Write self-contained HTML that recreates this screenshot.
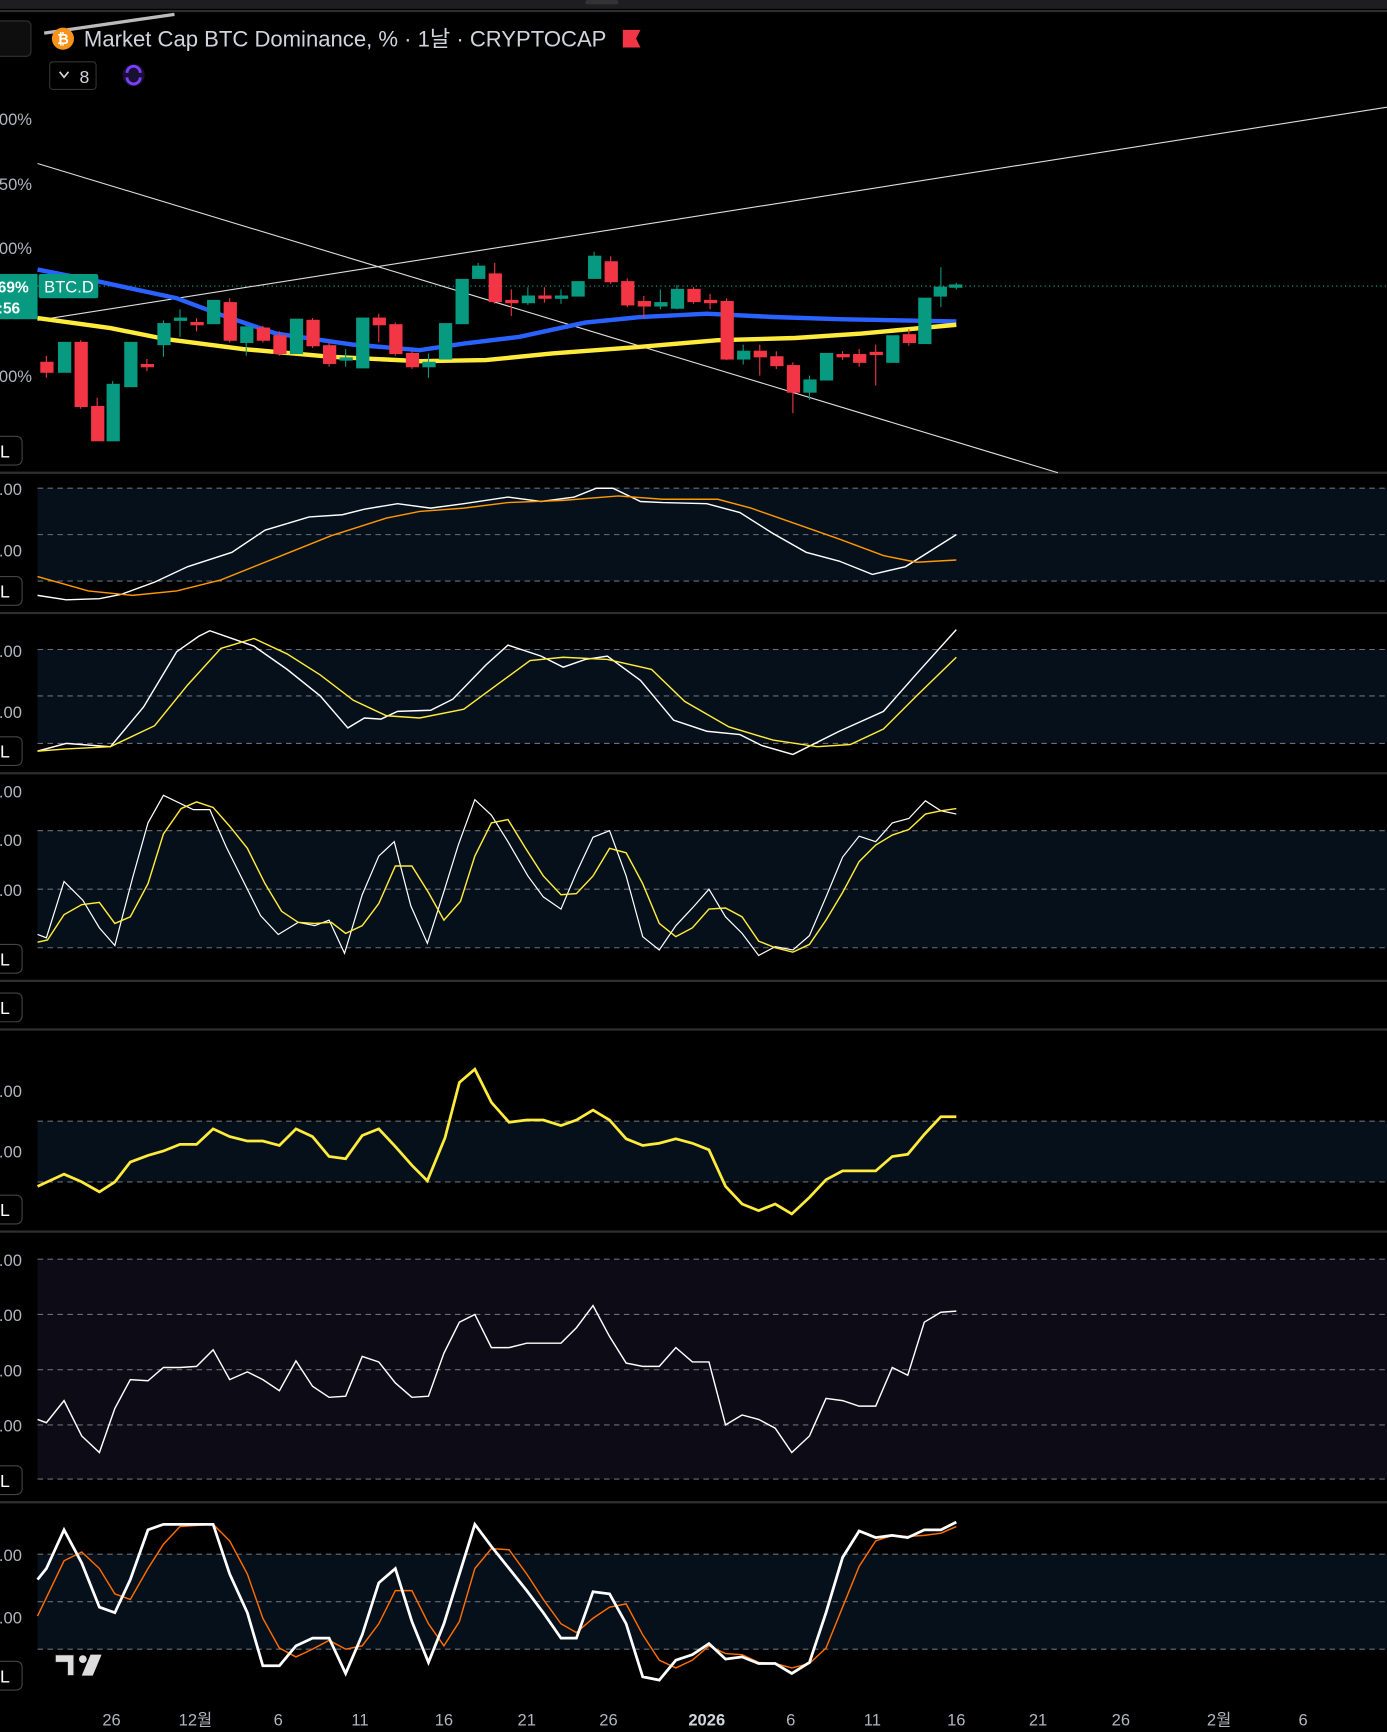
<!DOCTYPE html>
<html><head><meta charset="utf-8"><style>
html,body{margin:0;padding:0;background:#000;overflow:hidden}
svg{display:block}
text{font-family:"Liberation Sans","Noto Sans CJK KR",sans-serif}
</style></head><body>
<svg width="1387" height="1732" viewBox="0 0 1256 1568" preserveAspectRatio="none" xmlns="http://www.w3.org/2000/svg">
<rect width="1256" height="1568" fill="#000"/>
<rect x="0" y="0" width="1256" height="8" fill="#1e1e22"/>
<rect x="530" y="0" width="30" height="4" rx="2" fill="#333"/>
<line x1="0" y1="10" x2="1256" y2="10" stroke="#2e2e2e" stroke-width="2"/>
<g stroke="#2f2f2f" stroke-width="2">
<line x1="0" y1="428" x2="1256" y2="428"/><line x1="0" y1="555" x2="1256" y2="555"/>
<line x1="0" y1="700" x2="1256" y2="700"/><line x1="0" y1="888" x2="1256" y2="888"/>
<line x1="0" y1="932" x2="1256" y2="932"/><line x1="0" y1="1115" x2="1256" y2="1115"/>
<line x1="0" y1="1360" x2="1256" y2="1360"/>
</g>
<rect x="34" y="442" width="1222" height="84" fill="#06101a"/>
<rect x="34" y="588" width="1222" height="85" fill="#06101a"/>
<rect x="34" y="752" width="1222" height="106" fill="#06101a"/>
<rect x="34" y="1015" width="1222" height="55" fill="#06101a"/>
<rect x="34" y="1140" width="1222" height="199" fill="#0d0b16"/>
<rect x="34" y="1407" width="1222" height="86" fill="#06101a"/>
<g stroke="#6a6e78" stroke-width="1" stroke-dasharray="5,4">
<line x1="34" y1="442" x2="1256" y2="442"/><line x1="34" y1="484" x2="1256" y2="484"/><line x1="34" y1="526" x2="1256" y2="526"/>
<line x1="34" y1="588" x2="1256" y2="588"/><line x1="34" y1="630" x2="1256" y2="630"/><line x1="34" y1="673" x2="1256" y2="673"/>
<line x1="34" y1="752" x2="1256" y2="752"/><line x1="34" y1="805" x2="1256" y2="805"/><line x1="34" y1="858" x2="1256" y2="858"/>
<line x1="34" y1="1015" x2="1256" y2="1015"/><line x1="34" y1="1070" x2="1256" y2="1070"/>
<line x1="34" y1="1140" x2="1256" y2="1140"/><line x1="34" y1="1190" x2="1256" y2="1190"/><line x1="34" y1="1240" x2="1256" y2="1240"/><line x1="34" y1="1290" x2="1256" y2="1290"/><line x1="34" y1="1339" x2="1256" y2="1339"/>
<line x1="34" y1="1407" x2="1256" y2="1407"/><line x1="34" y1="1450" x2="1256" y2="1450"/><line x1="34" y1="1493" x2="1256" y2="1493"/>
</g>
<line x1="34" y1="259" x2="1256" y2="259" stroke="#0fb39a" stroke-width="1" stroke-dasharray="1,3"/>
<line x1="34" y1="148" x2="958" y2="428" stroke="#ddd" stroke-width="1"/>
<line x1="34" y1="290" x2="1256" y2="97" stroke="#ddd" stroke-width="1"/>
<line x1="40" y1="30" x2="158" y2="13" stroke="#bbb" stroke-width="3"/>
<polyline fill="none" stroke="#2962ff" stroke-width="4" points="34,244 90,255 160,270 200,285 250,302 320,312 380,317 420,311 470,305 530,292 580,287 640,284 700,287 760,289 866,291"/>
<polyline fill="none" stroke="#ffeb3b" stroke-width="4" points="34,288 100,297 150,307 220,316 300,323 380,327 440,326 500,320 580,314 650,308 720,306 780,302 866,294"/>
<g stroke-width="1">
<g fill="#f23645" stroke="#f23645">
<line x1="42" y1="322" x2="42" y2="342"/><rect x="37" y="328" width="11" height="9"/>
<line x1="73" y1="308" x2="73" y2="370"/><rect x="68" y="310" width="11" height="58"/>
<line x1="88" y1="360" x2="88" y2="399"/><rect x="83" y="368" width="11" height="31"/>
<line x1="133" y1="325" x2="133" y2="336"/><rect x="128" y="330" width="11" height="2"/>
<line x1="178" y1="288" x2="178" y2="300"/><rect x="173" y="292" width="11" height="2"/>
<line x1="208" y1="270" x2="208" y2="310"/><rect x="203" y="274" width="11" height="34"/>
<line x1="238" y1="295" x2="238" y2="310"/><rect x="233" y="297" width="11" height="11"/>
<line x1="253" y1="300" x2="253" y2="322"/><rect x="248" y="304" width="11" height="16"/>
<line x1="283" y1="288" x2="283" y2="315"/><rect x="278" y="290" width="11" height="23"/>
<line x1="298" y1="310" x2="298" y2="332"/><rect x="293" y="313" width="11" height="16"/>
<line x1="343" y1="284" x2="343" y2="310"/><rect x="338" y="288" width="11" height="6"/>
<line x1="358" y1="292" x2="358" y2="322"/><rect x="353" y="294" width="11" height="26"/>
<line x1="373" y1="318" x2="373" y2="334"/><rect x="368" y="320" width="11" height="12"/>
<line x1="448" y1="238" x2="448" y2="275"/><rect x="443" y="248" width="11" height="25"/>
<line x1="463" y1="262" x2="463" y2="286"/><rect x="458" y="272" width="11" height="2"/>
<line x1="493" y1="260" x2="493" y2="274"/><rect x="488" y="268" width="11" height="2"/>
<line x1="553" y1="232" x2="553" y2="257"/><rect x="548" y="237" width="11" height="18"/>
<line x1="568" y1="252" x2="568" y2="278"/><rect x="563" y="255" width="11" height="21"/>
<line x1="583" y1="268" x2="583" y2="288"/><rect x="578" y="273" width="11" height="4"/>
<line x1="628" y1="260" x2="628" y2="275"/><rect x="623" y="262" width="11" height="11"/>
<line x1="643" y1="266" x2="643" y2="280"/><rect x="638" y="272" width="11" height="2"/>
<line x1="658" y1="270" x2="658" y2="326"/><rect x="653" y="273" width="11" height="52"/>
<line x1="688" y1="312" x2="688" y2="340"/><rect x="683" y="318" width="11" height="5"/>
<line x1="703" y1="318" x2="703" y2="334"/><rect x="698" y="323" width="11" height="8"/>
<line x1="718" y1="328" x2="718" y2="374"/><rect x="713" y="331" width="11" height="24"/>
<line x1="763" y1="318" x2="763" y2="326"/><rect x="758" y="321" width="11" height="2"/>
<line x1="778" y1="316" x2="778" y2="332"/><rect x="773" y="321" width="11" height="7"/>
<line x1="793" y1="312" x2="793" y2="349"/><rect x="788" y="319" width="11" height="2"/>
<line x1="823" y1="298" x2="823" y2="313"/><rect x="818" y="303" width="11" height="7"/>
</g>
<g fill="#089981" stroke="#089981">
<rect x="53" y="310" width="11" height="27"/>
<line x1="102" y1="345" x2="102" y2="399"/><rect x="97" y="348" width="11" height="51"/>
<rect x="113" y="310" width="11" height="40"/>
<line x1="148" y1="290" x2="148" y2="323"/><rect x="143" y="293" width="11" height="19"/>
<line x1="163" y1="280" x2="163" y2="305"/><rect x="158" y="288" width="11" height="2"/>
<rect x="188" y="272" width="11" height="21"/>
<line x1="223" y1="294" x2="223" y2="322"/><rect x="218" y="296" width="11" height="14"/>
<rect x="263" y="289" width="11" height="31"/>
<line x1="313" y1="316" x2="313" y2="332"/><rect x="308" y="324" width="11" height="2"/>
<rect x="323" y="288" width="11" height="45"/>
<line x1="388" y1="320" x2="388" y2="342"/><rect x="383" y="328" width="11" height="4"/>
<rect x="398" y="293" width="11" height="32"/>
<rect x="413" y="253" width="11" height="40"/>
<line x1="433" y1="238" x2="433" y2="252"/><rect x="428" y="241" width="11" height="11"/>
<line x1="478" y1="260" x2="478" y2="276"/><rect x="473" y="268" width="11" height="6"/>
<line x1="508" y1="262" x2="508" y2="275"/><rect x="503" y="268" width="11" height="2"/>
<rect x="518" y="255" width="11" height="13"/>
<line x1="538" y1="228" x2="538" y2="252"/><rect x="533" y="232" width="11" height="20"/>
<line x1="598" y1="262" x2="598" y2="280"/><rect x="593" y="274" width="11" height="3"/>
<line x1="613" y1="258" x2="613" y2="280"/><rect x="608" y="262" width="11" height="17"/>
<line x1="673" y1="312" x2="673" y2="330"/><rect x="668" y="318" width="11" height="7"/>
<line x1="733" y1="340" x2="733" y2="362"/><rect x="728" y="344" width="11" height="11"/>
<rect x="743" y="320" width="11" height="24"/>
<rect x="803" y="304" width="11" height="24"/>
<rect x="832" y="270" width="11" height="41"/>
<line x1="852" y1="242" x2="852" y2="278"/><rect x="846" y="260" width="11" height="8"/>
<line x1="866" y1="256" x2="866" y2="262"/><rect x="860" y="258" width="11" height="2"/>
</g>
</g>
<rect x="-10" y="19" width="38" height="32" rx="4" fill="#0e0e0e" stroke="#333"/>
<circle cx="57" cy="35" r="10" fill="#f7931a"/>
<text x="57" y="40" font-size="13" font-weight="bold" fill="#fff" text-anchor="middle">₿</text>
<text x="76" y="42" font-size="20" fill="#d1d4dc" style="font-stretch:condensed">Market Cap BTC Dominance, % · 1날 · CRYPTOCAP</text>
<path d="M564 27 H580 L576 35 L580 43 H564 Z" fill="#f23645"/>
<rect x="45" y="56" width="42" height="25" rx="3" fill="#000" stroke="#333"/>
<path d="M54 65 L58 70 L62 65" fill="none" stroke="#d1d4dc" stroke-width="1.5"/>
<text x="72" y="75" font-size="16" fill="#d1d4dc">8</text>
<circle cx="121" cy="68" r="10" fill="#1a1033"/>
<path d="M115 66 A6 6 0 0 1 127 66 M127 70 A6 6 0 0 1 115 70" fill="none" stroke="#7b3fff" stroke-width="2.5"/>
<g font-size="15" fill="#b2b5be">
<text x="-1" y="113">00%</text><text x="-1" y="172">50%</text><text x="-1" y="230">00%</text><text x="-1" y="346">00%</text>
<text x="-1" y="448">.00</text><text x="-1" y="504">.00</text>
<text x="-1" y="595">.00</text><text x="-1" y="650">.00</text>
<text x="-1" y="722">.00</text><text x="-1" y="766">.00</text><text x="-1" y="811">.00</text>
<text x="-1" y="993">.00</text><text x="-1" y="1048">.00</text>
<text x="-1" y="1146">.00</text><text x="-1" y="1196">.00</text><text x="-1" y="1246">.00</text><text x="-1" y="1296">.00</text>
<text x="-1" y="1413">.00</text><text x="-1" y="1470">.00</text>
</g>
<rect x="-6" y="248" width="40" height="41" fill="#089981"/>
<text x="-2" y="265" font-size="14" font-weight="bold" fill="#fff">69%</text>
<text x="-2" y="284" font-size="14" font-weight="bold" fill="#fff">:56</text>
<rect x="35" y="248" width="54" height="22" rx="2" fill="#089981"/>
<text x="40" y="265" font-size="15" fill="#fff">BTC.D</text>
<g fill="#000" stroke="#444">
<rect x="-10" y="395" width="30" height="26" rx="5"/><rect x="-10" y="522" width="30" height="26" rx="5"/>
<rect x="-10" y="667" width="30" height="26" rx="5"/><rect x="-10" y="855" width="30" height="26" rx="5"/>
<rect x="-10" y="899" width="30" height="26" rx="5"/><rect x="-10" y="1082" width="30" height="26" rx="5"/>
<rect x="-10" y="1327" width="30" height="26" rx="5"/><rect x="-10" y="1504" width="30" height="26" rx="5"/>
</g>
<g font-size="16" fill="#fff">
<text x="0" y="414">L</text><text x="0" y="541">L</text><text x="0" y="686">L</text><text x="0" y="874">L</text>
<text x="0" y="918">L</text><text x="0" y="1101">L</text><text x="0" y="1346">L</text><text x="0" y="1523">L</text>
</g>
<polyline fill="none" stroke="#fff" stroke-width="1.3" points="34,539 60,543 90,542 110,538 140,527 170,513 210,500 240,480 280,468 310,466 330,461 360,456 390,460 420,456 460,450 490,454 520,450 540,442 555,442 580,454 600,455 640,456 670,464 700,483 730,500 760,508 790,520 820,513 866,484"/>
<polyline fill="none" stroke="#ff9800" stroke-width="1.3" points="34,522 80,535 120,539 160,535 200,525 250,505 300,485 350,469 380,463 420,460 460,455 510,453 560,449 600,452 650,452 680,460 720,474 760,488 800,503 830,509 866,507"/>
<polyline fill="none" stroke="#fff" stroke-width="1.3" points="34,680 60,673 100,676 130,640 160,590 180,576 190,571 230,585 260,606 290,630 315,659 330,650 345,651 360,644 390,643 410,633 440,602 460,584 490,594 510,604 530,597 550,594 580,616 610,652 640,662 670,665 690,675 718,683 760,662 800,644 830,610 866,570"/>
<polyline fill="none" stroke="#ffeb3b" stroke-width="1.3" points="34,680 60,678 100,676 140,657 170,620 200,587 230,578 260,592 290,611 320,634 350,648 380,650 420,642 450,620 480,598 510,595 550,597 590,606 620,635 660,658 700,670 740,676 770,674 800,660 830,630 866,595"/>
<polyline fill="none" stroke="#fff" stroke-width="1.1" points="34,846 42,849 58,798 75,815 90,840 104,856 120,795 134,745 148,720 175,733 190,733 205,767 236,829 252,846 270,835 285,838 298,833 312,863 328,810 343,775 357,762 372,820 387,854 402,807 415,765 430,724 445,738 460,762 478,793 492,812 508,823 522,790 537,758 552,752 567,793 582,848 597,860 612,838 627,822 642,805 657,830 672,845 687,865 702,857 718,860 733,847 748,812 763,776 778,757 793,762 808,745 823,741 838,725 852,734 866,737"/>
<polyline fill="none" stroke="#ffeb3b" stroke-width="1.3" points="34,853 43,851 58,828 74,819 90,817 104,836 118,830 134,800 148,755 164,732 178,726 193,731 208,748 224,768 240,800 255,825 270,835 285,836 300,835 313,845 328,838 343,818 358,784 373,784 388,808 402,833 417,816 430,775 445,745 460,742 476,768 492,793 508,810 522,809 537,793 552,768 567,772 582,800 597,836 612,848 627,840 642,823 657,822 672,830 687,852 702,858 718,862 733,855 748,833 763,808 778,780 793,765 808,756 823,751 838,737 852,734 866,732"/>
<polyline fill="none" stroke="#ffeb3b" stroke-width="2.5" points="34,1074 58,1063 74,1070 90,1079 104,1070 118,1052 134,1046 148,1042 163,1036 178,1036 193,1022 208,1029 224,1033 238,1033 253,1037 268,1022 283,1029 298,1047 313,1049 328,1028 343,1022 358,1038 373,1055 387,1069 403,1030 416,980 430,968 445,998 461,1016 477,1014 492,1014 508,1019 522,1014 537,1005 552,1014 567,1031 582,1037 597,1035 612,1031 627,1035 642,1041 657,1074 672,1090 687,1096 702,1090 717,1099 733,1084 748,1068 763,1060 778,1060 793,1060 808,1047 822,1045 837,1027 852,1011 866,1011"/>
<polyline fill="none" stroke="#fff" stroke-width="1.3" points="34,1285 42,1288 58,1268 74,1300 90,1315 104,1275 118,1249 134,1250 148,1238 163,1238 178,1237 193,1222 208,1249 224,1242 238,1249 253,1259 268,1232 283,1255 298,1265 313,1264 328,1228 343,1233 358,1252 373,1265 388,1264 402,1225 416,1197 430,1190 445,1220 461,1220 477,1216 492,1216 508,1216 522,1202 537,1182 552,1210 567,1234 582,1237 597,1237 612,1220 627,1233 642,1233 657,1290 672,1281 687,1285 702,1293 717,1315 733,1300 748,1266 763,1268 778,1273 793,1273 808,1238 822,1245 837,1197 852,1188 866,1187"/>
<polyline fill="none" stroke="#ff6d00" stroke-width="1.3" points="34,1463 58,1413 74,1405 90,1420 104,1443 118,1448 134,1420 148,1398 163,1382 193,1380 208,1395 224,1425 238,1465 253,1492 268,1500 283,1493 298,1485 313,1493 328,1490 343,1470 358,1440 373,1440 388,1470 402,1490 416,1468 430,1420 445,1402 461,1403 477,1425 492,1448 508,1470 522,1478 537,1465 552,1455 567,1452 582,1480 597,1503 612,1510 627,1503 642,1490 657,1497 672,1498 687,1505 702,1506 717,1510 733,1506 748,1492 763,1455 778,1418 793,1395 808,1390 822,1391 837,1390 852,1388 866,1382"/>
<polyline fill="none" stroke="#fff" stroke-width="2.5" points="34,1430 42,1420 58,1385 74,1415 90,1455 104,1460 118,1430 134,1385 148,1380 163,1380 193,1380 208,1425 224,1460 238,1508 253,1508 268,1490 283,1483 298,1483 313,1515 328,1480 343,1433 358,1420 373,1468 388,1505 402,1470 416,1425 430,1380 445,1400 461,1420 477,1440 492,1460 508,1483 522,1483 537,1441 552,1443 567,1470 582,1518 597,1521 612,1503 627,1498 642,1488 657,1502 672,1500 687,1506 702,1506 717,1515 733,1505 748,1460 763,1410 778,1386 793,1392 808,1390 822,1392 837,1385 852,1385 866,1378"/>
<path d="M50 1498 H67 V1517 H61 V1505 H50 Z" fill="#ddd" stroke="#111" stroke-width="1"/>
<circle cx="75" cy="1502" r="3.5" fill="#ddd"/>
<path d="M82 1498 H92 L84 1517 H74 Z" fill="#ddd"/>
<g font-size="15" fill="#b2b5be" text-anchor="middle">
<text x="101" y="1562">26</text><text x="177" y="1562">12월</text><text x="252" y="1562">6</text><text x="326" y="1562">11</text><text x="402" y="1562">16</text><text x="477" y="1562">21</text><text x="551" y="1562">26</text>
<text x="640" y="1562" font-weight="bold" fill="#d1d4dc">2026</text>
<text x="716" y="1562">6</text><text x="790" y="1562">11</text><text x="866" y="1562">16</text><text x="940" y="1562">21</text><text x="1015" y="1562">26</text><text x="1104" y="1562">2월</text><text x="1180" y="1562">6</text>
</g>
</svg>
</body></html>
